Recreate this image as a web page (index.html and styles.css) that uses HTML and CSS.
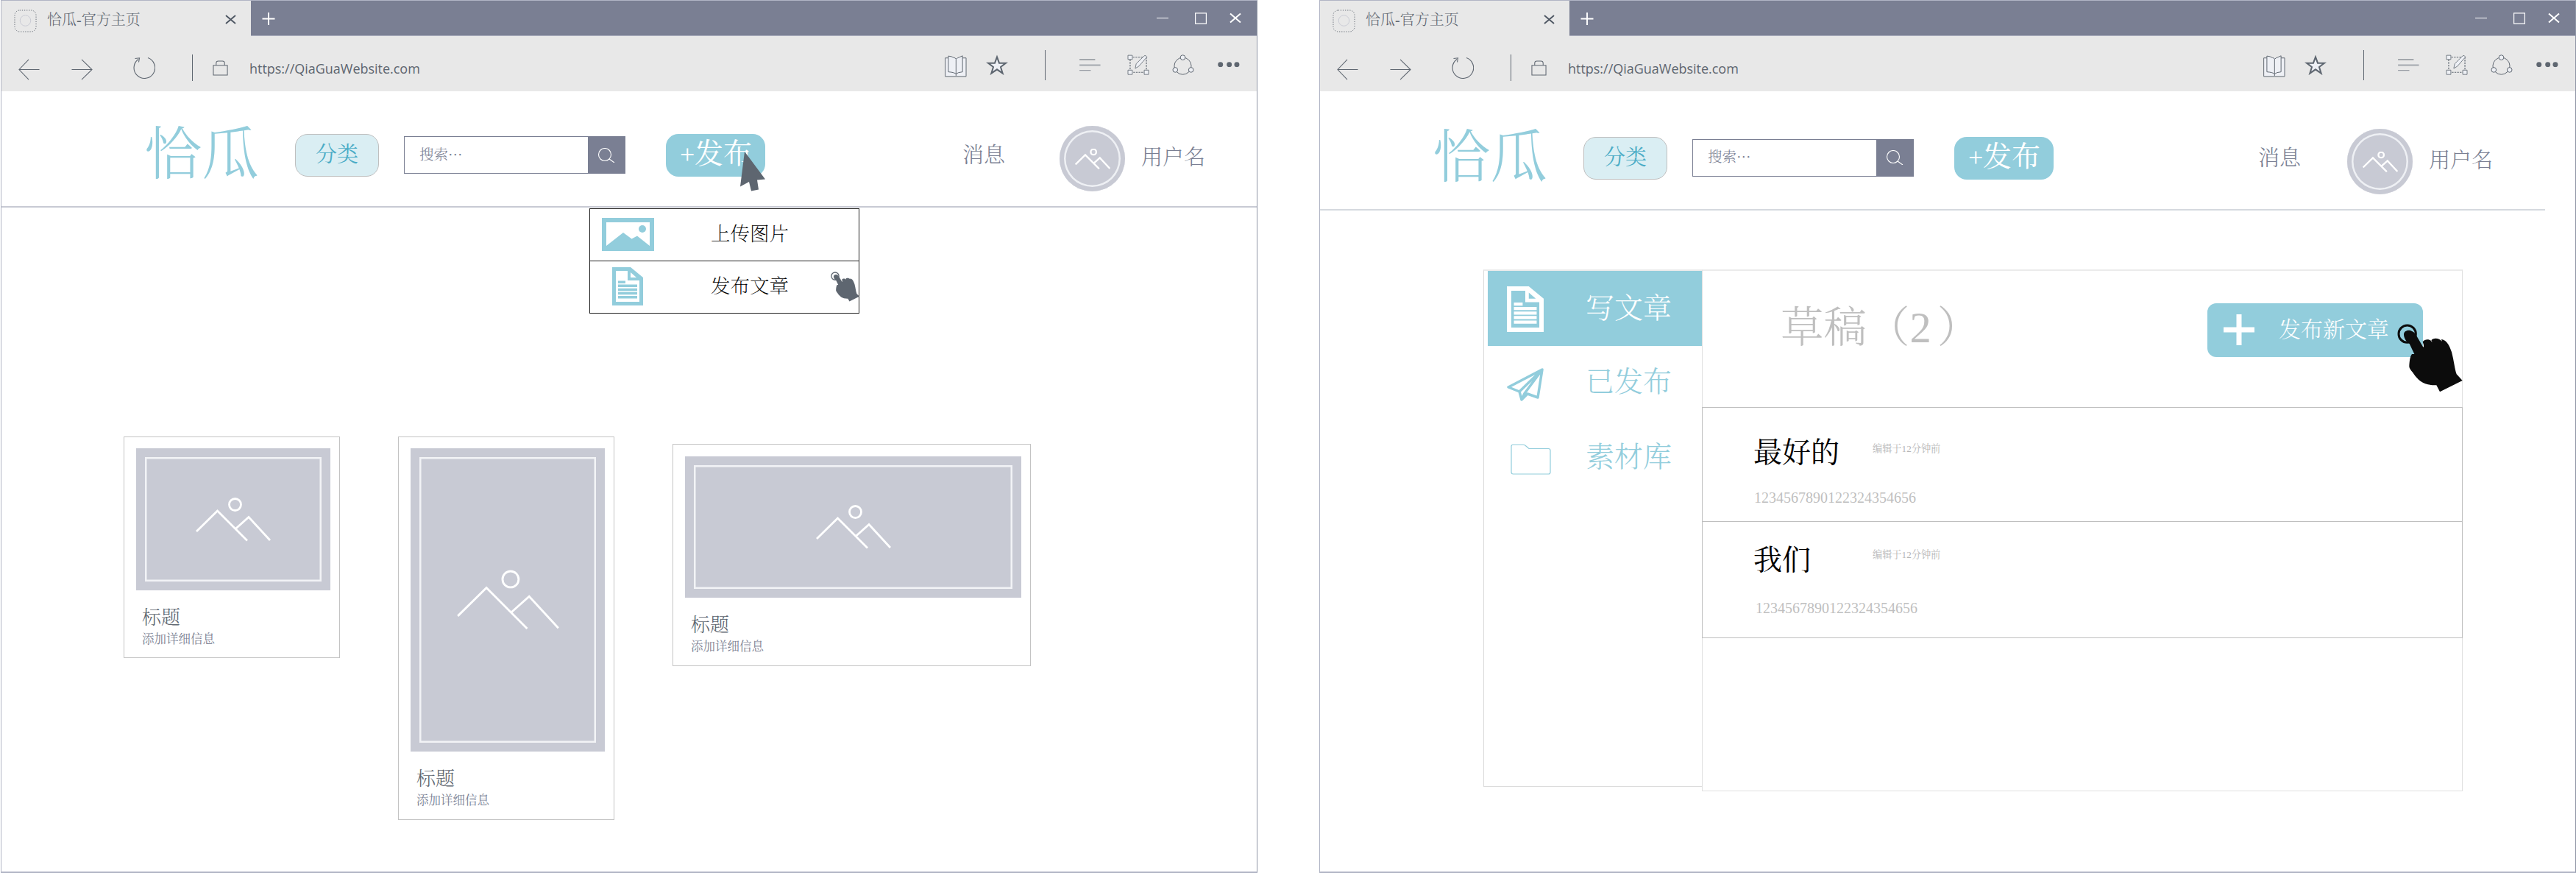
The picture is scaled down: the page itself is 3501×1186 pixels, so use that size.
FILE: index.html
```html
<!DOCTYPE html>
<html lang="zh-CN">
<head>
<meta charset="utf-8">
<title>恰瓜-官方主页</title>
<link rel="stylesheet" href="styles.css">
</head>
<body>
<svg class="sprite" aria-hidden="true">
  <symbol id="favicon" viewBox="0 0 32 32" fill="none"><rect x="1" y="1" width="30" height="30" rx="7" stroke="#5e6670" stroke-dasharray="1.3 1.9"/><circle cx="16" cy="15.5" r="7.5" stroke="#c8cad4"/></symbol>
  <symbol id="close" viewBox="0 0 16 14" fill="none" stroke="currentColor" stroke-width="2"><path d="M1 1L15 13M15 1L1 13"/></symbol>
  <symbol id="plus" viewBox="0 0 18 18" fill="none" stroke="currentColor" stroke-width="2"><path d="M9 0V18M0 9H18"/></symbol>
  <symbol id="cross" viewBox="0 0 42 42" fill="none" stroke="currentColor" stroke-width="7"><path d="M21 0V42M0 21H42"/></symbol>
  <symbol id="max" viewBox="0 0 16 16" fill="none" stroke="currentColor" stroke-width="1.2"><path d="M.6 .8H15.4V15.2H.6Z"/></symbol>
  <symbol id="back" viewBox="0 0 30 30" fill="none" stroke="currentColor" stroke-width="1.1"><path d="M14.5 1L1 15L14.5 29M1 15H29.5"/></symbol>
  <symbol id="forward" viewBox="0 0 30 30" fill="none" stroke="currentColor" stroke-width="1.1"><path d="M14.5 1L29 15L14.5 29M29 15H.5"/></symbol>
  <symbol id="reload" viewBox="0 0 30 30" fill="none" stroke="currentColor" stroke-width="1.1"><path d="M7 3.5A14.3 14.3 0 1 0 20 1.600M2.500 2.500L8.500 1.800L7.500 7.500"/></symbol>
  <symbol id="lock" viewBox="0 0 22 22" fill="none" stroke="currentColor" stroke-width="1.1"><path d="M1 7H21V21H1ZM5 7V4Q5 1 8 1H14Q17 1 17 4V7"/></symbol>
  <symbol id="book" viewBox="35 42 92 92" fill="#eef0f5" stroke="#5e6670" stroke-width="3"><path d="M50 55H37V132H124V55H109"/><path d="M50 47Q64 48 73 54Q80 54 82 60Q88 54 96 52L109 46V113Q88 115 82 122Q76 115 50 113ZM82 60V130"/></symbol>
  <symbol id="star" viewBox="205 42 90 84" fill="#eef0f5" stroke="#5e6670" stroke-width="6"><path d="M250 52L259 77L286 77L265 93L273 119L250 103L227 119L235 93L214 77L241 77Z"/></symbol>
  <symbol id="lines" viewBox="589 58 88 52" fill="none" stroke="#5e6670" stroke-width="3"><path d="M589 61H654"/><path d="M589 84H676" stroke="#a2a7ad" stroke-width="6"/><path d="M589 106H636" stroke="#858b93"/></symbol>
  <symbol id="edit" viewBox="785 42 91 84" fill="#eef0f5" stroke="#5e6670" stroke-width="2.500"><path d="M797 53H864V115H797Z" fill="none" stroke-width="3.500" stroke-dasharray="7 4"/><path d="M788 45H806V62H788ZM788 106H806V124H788ZM855 106H873V124H855Z"/><path d="M818 99L822 80L855 47Q862 43 866 52L833 90Z"/></symbol>
  <symbol id="share" viewBox="969 42 91 84" fill="#eef0f5" stroke="#5e6670" stroke-width="3"><circle cx="1013" cy="89" r="35" fill="none"/><circle cx="1013" cy="54" r="10"/><circle cx="982" cy="105" r="10"/><circle cx="1047" cy="105" r="10"/></symbol>
  <symbol id="dots" viewBox="1154 73 90 22" fill="#5e6670"><circle cx="1165" cy="84" r="10.500"/><circle cx="1201" cy="84" r="10.500"/><circle cx="1232" cy="84" r="10.500"/></symbol>
  <symbol id="search" viewBox="0 0 24 20" fill="none" stroke="#fff" stroke-width="1.100"><circle cx="10" cy="9" r="8.500"/><path d="M16 15L23 20"/></symbol>
  <symbol id="mountain" viewBox="0 0 102 60" fill="none" stroke="#fff"><path d="M1 46L29.500 18L70 58.500M53.500 43L72 26.500L101 58"/><circle cx="53.500" cy="9.500" r="8"/></symbol>
  <symbol id="picture" viewBox="0 0 71 45" fill="currentColor"><path fill-rule="evenodd" d="M0 0H71V45H0ZM6 6V38L29 20L40.500 28.500L48 24.500L65 38V6Z"/><circle cx="55" cy="15" r="5"/></symbol>
  <symbol id="doc" viewBox="0 0 42 52" fill="currentColor"><path fill-rule="evenodd" d="M0 0H25L42 14V52H0ZM5 5V47H37V18H21V5ZM25 7V14H33Z"/><path d="M8 18.500H18V22H8ZM8 23.500H34V27H8ZM8 28.700H34V32.200H8ZM8 33.800H34V37.300H8ZM8 39H34V42.500H8Z"/></symbol>
  <symbol id="plane" viewBox="0 0 50 45" fill="none" stroke="currentColor" stroke-width="3.500" stroke-linejoin="round"><path d="M48 2L2 26L17 32L20 43L28 35L42 40ZM17 32L48 2L24 34.500L20 43"/></symbol>
  <symbol id="folder" viewBox="0 0 55 42" fill="none" stroke="currentColor" stroke-width="1.200"><path d="M1 3.500Q1 1 3.500 1H17Q19 1 21 3L25 6.500H51.500Q54 6.500 54 9V38.500Q54 41 51.500 41H3.500Q1 41 1 38.500Z"/></symbol>
  <symbol id="hand" viewBox="54 27 267 279"><circle cx="95" cy="68" r="35" fill="none" stroke="currentColor" stroke-width="9"/><path fill="currentColor" d="M81 70C81 57 95 50 108 54C120 58 126 64 132 74L160 122C165 118 160 108 158 100C168 86 190 88 196 102C196 98 194 95 193 94C200 82 226 84 236 98C236 94 235 91 234 89C258 94 268 118 276 142C286 180 288 210 296 232L320 258L228 304L214 277C160 278 140 258 118 226C108 214 102 206 103 198C104 180 106 160 114 150L124 150L104 108C90 100 81 84 81 70Z"/></symbol>
  <symbol id="pointer" viewBox="0 0 34 54" fill="currentColor"><path d="M6 0L34 37.500L23 38.500L25 51.500L15 53.500L12 41L0 47.500Z"/></symbol>
</svg>

<main class="board">
  <section class="window">
    <div class="tabs">
      <div class="tab"><svg class="favicon"><use href="#favicon"/></svg><span class="tab-title">恰瓜-官方主页</span><svg class="tab-close"><use href="#close"/></svg></div>
      <svg class="new-tab"><use href="#plus"/></svg>
      <div class="controls"><i class="min"></i><svg class="max"><use href="#max"/></svg><svg class="quit"><use href="#close"/></svg></div>
    </div>
    <div class="toolbar">
      <div class="nav"><svg class="arrow"><use href="#back"/></svg><svg class="arrow next"><use href="#forward"/></svg><svg class="reload"><use href="#reload"/></svg><i class="rule"></i><svg class="lock"><use href="#lock"/></svg><span class="url">https://QiaGuaWebsite.com</span></div>
      <div class="tools"><svg class="book"><use href="#book"/></svg><svg class="star"><use href="#star"/></svg><i class="rule tall"></i><svg class="lines"><use href="#lines"/></svg><svg class="edit"><use href="#edit"/></svg><svg class="share"><use href="#share"/></svg><svg class="dots"><use href="#dots"/></svg></div>
    </div>
    <header class="site home">
      <h1 class="logo">恰瓜</h1>
      <a class="category">分类</a>
      <div class="search"><span class="query">搜索<b class="ellipsis">…</b></span><span class="go"><svg><use href="#search"/></svg></span></div>
      <a class="publish"><span class="sign">+</span>发布<svg class="pointer"><use href="#pointer"/></svg></a>
      <a class="messages">消息</a>
      <div class="avatar"><svg><use href="#mountain"/></svg></div>
      <span class="user">用户名</span>
      <div class="menu">
        <div class="item"><span class="pic"><svg class="picture"><use href="#picture"/></svg></span>上传图片</div>
        <div class="item"><span class="pic"><svg class="doc"><use href="#doc"/></svg></span>发布文章<svg class="hand small"><use href="#hand"/></svg></div>
      </div>
    </header>
    <div class="feed">
      <article class="card"><div class="thumb"><svg><use href="#mountain"/></svg></div><h2>标题</h2><p>添加详细信息</p></article>
      <article class="card tallcard"><div class="thumb"><svg><use href="#mountain"/></svg></div><h2>标题</h2><p>添加详细信息</p></article>
      <article class="card widecard"><div class="thumb"><svg><use href="#mountain"/></svg></div><h2>标题</h2><p>添加详细信息</p></article>
    </div>
  </section>

  <section class="window">
    <div class="tabs">
      <div class="tab"><svg class="favicon"><use href="#favicon"/></svg><span class="tab-title">恰瓜-官方主页</span><svg class="tab-close"><use href="#close"/></svg></div>
      <svg class="new-tab"><use href="#plus"/></svg>
      <div class="controls"><i class="min"></i><svg class="max"><use href="#max"/></svg><svg class="quit"><use href="#close"/></svg></div>
    </div>
    <div class="toolbar">
      <div class="nav"><svg class="arrow"><use href="#back"/></svg><svg class="arrow next"><use href="#forward"/></svg><svg class="reload"><use href="#reload"/></svg><i class="rule"></i><svg class="lock"><use href="#lock"/></svg><span class="url">https://QiaGuaWebsite.com</span></div>
      <div class="tools"><svg class="book"><use href="#book"/></svg><svg class="star"><use href="#star"/></svg><i class="rule tall"></i><svg class="lines"><use href="#lines"/></svg><svg class="edit"><use href="#edit"/></svg><svg class="share"><use href="#share"/></svg><svg class="dots"><use href="#dots"/></svg></div>
    </div>
    <header class="site editor">
      <h1 class="logo">恰瓜</h1>
      <a class="category">分类</a>
      <div class="search"><span class="query">搜索<b class="ellipsis">…</b></span><span class="go"><svg><use href="#search"/></svg></span></div>
      <a class="publish"><span class="sign">+</span>发布</a>
      <a class="messages">消息</a>
      <div class="avatar"><svg><use href="#mountain"/></svg></div>
      <span class="user">用户名</span>
    </header>
    <div class="workspace">
      <nav class="side">
        <a class="entry active"><span class="ico"><svg class="doc"><use href="#doc"/></svg></span>写文章</a>
        <a class="entry sent"><span class="ico"><svg class="plane"><use href="#plane"/></svg></span>已发布</a>
        <a class="entry"><span class="ico"><svg class="folder"><use href="#folder"/></svg></span>素材库</a>
      </nav>
      <div class="panel">
        <div class="panel-head"><h2>草稿（<span class="count">2</span>）</h2><a class="create"><svg class="cross"><use href="#cross"/></svg>发布新文章<svg class="hand"><use href="#hand"/></svg></a></div>
        <div class="draft"><div class="line"><h3>最好的</h3><time>编辑于12分钟前</time></div><p>1234567890122324354656</p></div>
        <div class="draft second"><div class="line"><h3>我们</h3><time>编辑于12分钟前</time></div><p>1234567890122324354656</p></div>
      </div>
    </div>
  </section>
</main>
</body>
</html>
```
FILE: styles.css
```css
* { box-sizing: border-box; margin: 0; padding: 0; }
body { width: 3501px; height: 1186px; overflow: hidden; background: #fff; color: #5e6670; font-family: "Liberation Serif", "Noto Serif CJK SC", "Noto Sans CJK SC", serif; font-weight: 200; line-height: 1; }
h1, h2, h3, b { font-weight: 200; }
i { display: block; }
svg { display: block; flex: none; overflow: visible; }
.sprite { position: absolute; width: 0; height: 0; }
.board { display: flex; gap: 84px; padding-left: 1px; }
.window { width: 1708px; height: 1186px; flex: none; border: 1.5px solid #b1b5c5; border-right-color: #8f95a5; border-bottom-width: 2px; background: #fff; }

.tabs { display: flex; align-items: center; height: 48px; background: #7a7f93; border-bottom: 1px solid #a9adbd; color: #fff; }
.tab { display: flex; align-items: center; width: 339px; height: 48px; padding-left: 17px; background: #e8e8e8; color: #5e6670; }
.favicon { width: 31px; height: 31px; margin-top: 7px; }
.tab-title { margin: 4px 0 0 14px; font-size: 20px; width: 242px; font-weight: 300; }
.tab-close { width: 15px; height: 13px; margin-top: 3px; color: #4d5662; }
.new-tab { width: 18px; height: 17px; margin: 2px 0 0 15px; }
.controls { display: flex; align-items: center; margin-left: auto; padding-right: 21px; }
.min { width: 16px; height: 1.5px; margin-right: 36px; background: #fff; }
.max { width: 16px; height: 16px; margin-right: 31px; }
.quit { width: 16px; height: 15px; }

.toolbar { display: flex; justify-content: space-between; height: 75px; background: #e8e8e8; }
.nav, .tools { display: flex; align-items: center; }
.nav { padding: 11px 0 0 23px; }
.arrow { width: 29px; height: 29px; margin-top: 4px; }
.next { margin-left: 43px; }
.reload { width: 30px; height: 30px; margin-left: 55px; }
.rule { width: 1px; height: 36px; margin-left: 50px; background: #5e6670; }
.lock { width: 21px; height: 21px; margin-left: 27px; }
.url { margin: 2px 0 0 29px; font: 400 18px "Open Sans", "Noto Sans", sans-serif; letter-spacing: -.02px; line-height: 24px; }
.tools { padding: 3px 23px 0 0; }
.book { width: 30px; height: 31px; margin-top: 2px; }
.star { width: 30px; height: 28px; margin-left: 26px; }
.tall { height: 41px; }
.lines { width: 29px; height: 17px; margin-left: 46px; }
.edit { width: 30px; height: 28px; margin-left: 36px; }
.share { width: 30px; height: 28px; margin-left: 31px; }
.dots { width: 30px; height: 7.300px; margin-left: 32px; }

.site { display: flex; align-items: center; position: relative; height: 158px; padding: 17px 0 0 194px; border-bottom: 2px solid #c8cad4; }
.logo { width: 157px; margin: 0 48px 0 0; font-size: 78px; font-weight: 300; color: #92cddc; }
.category { display: flex; align-items: center; justify-content: center; width: 114px; height: 58px; border: 1px solid #bfbfbf; border-radius: 17px; background: #daeef3; color: #4bacc6; font-size: 29px; font-weight: 400; }
.search { display: flex; align-items: stretch; width: 301px; height: 51px; margin: 0 55px 0 34px; border: 1px solid #7a7f93; }
.query { display: flex; align-items: center; flex: 1; padding-left: 20px; font-size: 19.500px; font-weight: 300; color: #7a7f93; }
.ellipsis { font-family: "Noto Serif CJK SC", "Noto Sans CJK SC", serif; font-weight: 600; }
.go { display: flex; align-items: center; justify-content: center; width: 50px; background: #7a7f93; }
.go svg { width: 24px; height: 20px; }
.publish { display: flex; align-items: center; position: relative; width: 135px; height: 58px; padding: 0 0 4px 19px; border-radius: 17px; background: #92cddc; color: #fff; font-size: 39px; font-weight: 400; }
.sign { width: 20px; margin-top: 2px; font-size: 36px; }
.pointer { position: absolute; left: 101px; top: 24px; width: 34px; height: 54px; color: #5e6670; }
.messages { width: 58px; margin: 1px 0 0 268px; font-size: 29px; color: #7a7f93; font-weight: 300; }
.avatar { display: flex; align-items: center; justify-content: center; width: 89px; height: 89px; margin: 9px 22px 0 74px; border-radius: 50%; background: #c8cad4; box-shadow: inset 0 0 0 6px #c8cad4, inset 0 0 0 8.500px #eef0f4; }
.avatar svg { width: 48px; height: 28px; stroke-width: 5px; margin-top: 2px; }
.user { margin-top: 8px; font-size: 29px; color: #7a7f93; font-weight: 300; }
.editor { width: 1665px; height: 162px; padding: 21px 0 0 153px; border-color: #d5d9df; }
.editor .search { margin-top: -1px; }
.editor .messages { margin-left: 278px; }
.editor .avatar { margin-left: 63px; }

.menu { position: absolute; left: 799px; top: 159px; width: 367px; height: 143px; border: 1.500px solid #222; background: #fff; color: #000; font-size: 26.500px; }
.item { display: flex; align-items: center; position: relative; height: 70px; padding-bottom: 1px; }
.item + .item { border-top: 1.500px solid #222; }
.pic { display: flex; justify-content: center; width: 70px; margin: 0 78px 0 16px; color: #92cddc; }
.picture { width: 71px; height: 45px; }
.item .doc { width: 42px; height: 52px; }
.hand { position: absolute; left: 258px; top: 28px; width: 89px; height: 93px; color: #0c0c0c; }
.hand.small { left: 327px; top: 14px; width: 39px; height: 41px; color: #5e6670; }

.feed { display: flex; align-items: flex-start; gap: 79px; padding: 311px 0 0 166px; }
.card { width: 294px; height: 301px; padding: 15px 12px 0 16px; border: 1px solid #c3c3c3; background: #fff; }
.thumb { display: flex; align-items: center; justify-content: center; height: 193px; background: #c8cad4; box-shadow: inset 0 0 0 12px #c8cad4, inset 0 0 0 14.500px #f2f3f6; }
.thumb svg { width: 102px; height: 60px; stroke-width: 2.800px; }
.card h2 { margin: 25px 0 0 8px; font-size: 26px; font-weight: 300; }
.card p { margin: 8px 0 0 8px; font-size: 16.500px; font-weight: 400; color: #7a7f93; }
.tallcard { height: 521px; }
.tallcard .thumb { height: 412px; }
.tallcard .thumb svg { width: 141px; height: 82px; stroke-width: 2.100px; }
.widecard { width: 487px; height: 302px; margin-top: 10px; padding-top: 16px; }
.widecard .thumb { height: 192px; }

.workspace { display: flex; align-items: flex-start; padding: 80px 0 0 222px; }
.side { width: 297px; height: 703px; padding-left: 5px; border: 1px solid #dcdcdc; border-top: 2px solid #ebebeb; border-right: 0; color: #92cddc; }
.entry { display: flex; align-items: center; height: 103px; padding-bottom: 2px; font-size: 39px; font-weight: 300; }
.ico { display: flex; align-items: center; width: 133px; padding-left: 26px; }
.active { height: 102px; background: #92cddc; color: #fff; }
.active .doc { width: 50px; height: 62px; margin-top: 3px; }
.plane { width: 50px; height: 45px; margin-top: 8px; }
.folder { width: 55px; height: 42px; margin: 6px 0 0 5px; }
.sent { height: 98px; }
.sent + .entry { padding: 2px 0 0; }
.panel { width: 1034px; height: 709px; border: 1px solid #e0e0e0; border-top: 2px solid #ebebeb; }
.panel-head { display: flex; height: 185px; padding: 44px 0 0 106px; }
.panel-head h2 { width: 580px; margin-top: 5px; font-size: 58.500px; font-weight: 300; color: #bfbfbf; white-space: nowrap; }
.count { margin-right: 8px; }
.create { display: flex; align-items: center; position: relative; width: 293px; height: 73px; padding: 0 0 2px 22px; border-radius: 12px; background: #92cddc; color: #fff; font-size: 30px; font-weight: 300; }
.cross { width: 42px; height: 42px; margin-right: 33px; }
.draft { width: 1034px; height: 156px; margin-left: -1px; padding: 41px 0 0 69px; border: 1px solid #bfbfbf; }
.line { display: flex; }
.draft h3 { width: 161px; font-size: 39px; font-weight: 400; color: #000; }
.draft time { margin: 8px 0 0 1px; font-size: 13.200px; font-weight: 400; color: #b5b5b5; }
.draft p { margin: 32px 0 0 1px; font-size: 20px; color: #bfbfbf; }
.second { height: 159px; margin-top: -1px; padding-top: 32px; }
.second time { margin-top: 6px; }
.second p { margin: 36px 0 0 3px; }
```
